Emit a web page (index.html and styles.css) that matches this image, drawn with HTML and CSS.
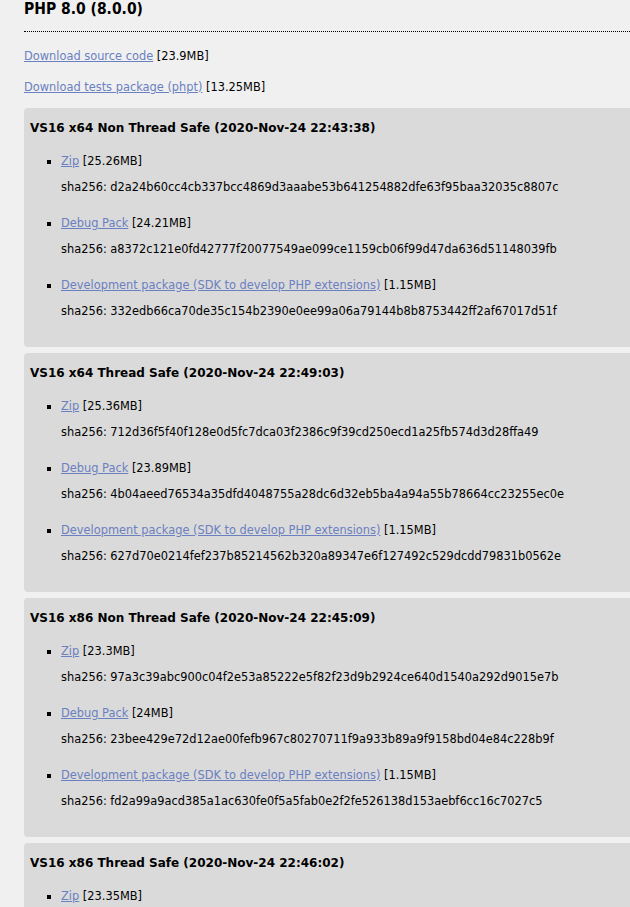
FILE: index.html
```html
<!DOCTYPE html>
<html lang="en">
<head>
    <meta charset="UTF-8">
    <title>PHP 8.0 (8.0.0)</title>
    <link rel="stylesheet" href="styles.css">
</head>
<body>

<div class="content">
    <h2>PHP 8.0 (8.0.0)</h2>

    <p><a href="#">Download source code</a> [23.9MB]</p>
    <p><a href="#">Download tests package (phpt)</a> [13.25MB]</p>

    <div class="build">
        <h3>VS16 x64 Non Thread Safe (2020-Nov-24 22:43:38)</h3>
        <ul>
            <li>
                <a href="#">Zip</a> [25.26MB]
                <span class="sha">sha256: d2a24b60cc4cb337bcc4869d3aaabe53b641254882dfe63f95baa32035c8807c</span>
            </li>
            <li>
                <a href="#">Debug Pack</a> [24.21MB]
                <span class="sha">sha256: a8372c121e0fd42777f20077549ae099ce1159cb06f99d47da636d51148039fb</span>
            </li>
            <li>
                <a href="#">Development package (SDK to develop PHP extensions)</a> [1.15MB]
                <span class="sha">sha256: 332edb66ca70de35c154b2390e0ee99a06a79144b8b8753442ff2af67017d51f</span>
            </li>
        </ul>
    </div>

    <div class="build">
        <h3>VS16 x64 Thread Safe (2020-Nov-24 22:49:03)</h3>
        <ul>
            <li>
                <a href="#">Zip</a> [25.36MB]
                <span class="sha">sha256: 712d36f5f40f128e0d5fc7dca03f2386c9f39cd250ecd1a25fb574d3d28ffa49</span>
            </li>
            <li>
                <a href="#">Debug Pack</a> [23.89MB]
                <span class="sha">sha256: 4b04aeed76534a35dfd4048755a28dc6d32eb5ba4a94a55b78664cc23255ec0e</span>
            </li>
            <li>
                <a href="#">Development package (SDK to develop PHP extensions)</a> [1.15MB]
                <span class="sha">sha256: 627d70e0214fef237b85214562b320a89347e6f127492c529dcdd79831b0562e</span>
            </li>
        </ul>
    </div>

    <div class="build">
        <h3>VS16 x86 Non Thread Safe (2020-Nov-24 22:45:09)</h3>
        <ul>
            <li>
                <a href="#">Zip</a> [23.3MB]
                <span class="sha">sha256: 97a3c39abc900c04f2e53a85222e5f82f23d9b2924ce640d1540a292d9015e7b</span>
            </li>
            <li>
                <a href="#">Debug Pack</a> [24MB]
                <span class="sha">sha256: 23bee429e72d12ae00fefb967c80270711f9a933b89a9f9158bd04e84c228b9f</span>
            </li>
            <li>
                <a href="#">Development package (SDK to develop PHP extensions)</a> [1.15MB]
                <span class="sha">sha256: fd2a99a9acd385a1ac630fe0f5a5fab0e2f2fe526138d153aebf6cc16c7027c5</span>
            </li>
        </ul>
    </div>

    <div class="build">
        <h3>VS16 x86 Thread Safe (2020-Nov-24 22:46:02)</h3>
        <ul>
            <li>
                <a href="#">Zip</a> [23.35MB]
            </li>
        </ul>
    </div>
</div>

</body>
</html>
```

FILE: styles.css
```css
/* Page */
body {
    margin: 0;
    background-color: #f0f0f0;
    color: #000;
    font-family: "DejaVu Sans", Verdana, sans-serif;
    font-size: 11.4px;
}

.content {
    padding-left: 24px;
    overflow: hidden;
}

/* Title */
h2 {
    margin: 0;
    padding-bottom: 12px;
    font-family: "DejaVu Sans Condensed", "DejaVu Sans", sans-serif;
    font-size: 15.5px;
    line-height: 19px;
    border-bottom: 1px dotted #000;
}

p {
    margin: 17px 0 0 0;
    line-height: 14px;
}

a {
    color: #6b80c0;
}

/* Build boxes */
.build {
    margin: 14px -20px 6px 0;
    padding: 12px 0 28px 6px;
    background-color: #dadada;
    border-radius: 4px;
}

.build + .build {
    margin-top: 0;
}

h3 {
    margin: 0;
    font-size: 12px;
    line-height: 16px;
}

ul {
    list-style: square;
    margin: 17px 0 0 0;
    padding-left: 31px;
}

li {
    line-height: 16px;
    margin-top: 20px;
}

li:first-child {
    margin-top: 0;
}

.sha {
    display: block;
    margin-top: 10px;
}
```
